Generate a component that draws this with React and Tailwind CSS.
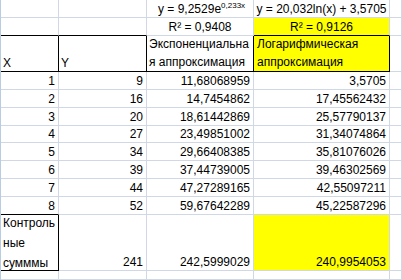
const GRID = '#d0d7e5';

const Cell = ({ children, r = GRID, b = GRID, bg, className = '' }) => (
  <div
    className={`border-r border-b flex items-end min-w-0 ${bg || ''} ${className}`}
    style={{ borderRightColor: r, borderBottomColor: b }}
  >
    {children}
  </div>
);

const rows = [
  [1, 9, '11,68068959', '3,5705'],
  [2, 16, '14,7454862', '17,45562432'],
  [3, 20, '18,61442869', '25,57790137'],
  [4, 27, '23,49851002', '31,34074864'],
  [5, 34, '29,66408385', '35,81076026'],
  [6, 39, '37,44739005', '39,46302569'],
  [7, 44, '47,27289165', '42,55097211'],
  [8, 52, '59,67642289', '45,22587296'],
];

const Num = ({ children }) => (
  <span className="w-full text-right pr-[3px] leading-[15px] whitespace-nowrap">{children}</span>
);

export default function App() {
  return (
    <div
      className="w-[402px] h-[280px] overflow-hidden bg-white text-[12px] text-black border-l border-[#b8cce4]"
      style={{ fontFamily: '"Liberation Sans", Arial, sans-serif' }}
    >
      <div className="grid grid-cols-[58px_88px_107px_136px_1fr] grid-rows-[18px_18px_36px_18px_18px_18px_17px_18px_18px_18px_18px_56px_1fr] h-full">
        {/* row 1 */}
        <Cell />
        <Cell />
        <Cell className="overflow-visible">
          <span className="pl-[11px] leading-[15px] whitespace-nowrap relative z-10">
            y = 9,2529e<span className="text-[8px] leading-[0] align-[5px]">0,233x</span>
          </span>
        </Cell>
        <Cell>
          <span className="w-full text-center leading-[15px] whitespace-nowrap">y = 20,032ln(x) + 3,5705</span>
        </Cell>
        <Cell />

        {/* row 2 */}
        <Cell b="#000" />
        <Cell b="#000" />
        <Cell>
          <span className="w-full text-center leading-[15px] whitespace-nowrap">R² = 0,9408</span>
        </Cell>
        <Cell b="#000" bg="bg-[#ffff00]">
          <span className="w-full text-center leading-[15px] whitespace-nowrap">R² = 0,9126</span>
        </Cell>
        <Cell />

        {/* header */}
        <Cell r="#000" b="#000">
          <span className="pl-[2px] leading-[15px]">X</span>
        </Cell>
        <Cell r="#000" b="#000">
          <span className="pl-[2px] leading-[15px]">Y</span>
        </Cell>
        <Cell r="#000" b="#000" className="overflow-hidden">
          <span className="pl-[2px] leading-[18px] whitespace-nowrap">
            Экспоненциальна
            <br />я аппроксимация
          </span>
        </Cell>
        <Cell r="#000" b="#000" bg="bg-[#ffff00]">
          <span className="pl-[3px] leading-[18px] whitespace-nowrap">
            Логарифмическая
            <br />
            аппроксимация
          </span>
        </Cell>
        <Cell />

        {rows.map((row, i) => (
          <div key={i} className="contents">
            <Cell b={i === 7 ? '#000' : GRID}>
              <Num>{row[0]}</Num>
            </Cell>
            <Cell>
              <Num>{row[1]}</Num>
            </Cell>
            <Cell>
              <Num>{row[2]}</Num>
            </Cell>
            <Cell>
              <Num>{row[3]}</Num>
            </Cell>
            <Cell />
          </div>
        ))}

        {/* control sums */}
        <Cell r="#000" b="#000">
          <span className="pl-[2px] leading-[20px] -mb-[3px]">
            Контроль
            <br />
            ные
            <br />
            сумммы
          </span>
        </Cell>
        <Cell>
          <Num>241</Num>
        </Cell>
        <Cell>
          <Num>242,5999029</Num>
        </Cell>
        <Cell bg="bg-[#ffff00]">
          <Num>240,9954053</Num>
        </Cell>
        <Cell />

        {/* last row */}
        <Cell />
        <Cell />
        <Cell />
        <Cell />
        <Cell />
      </div>
    </div>
  );
}
